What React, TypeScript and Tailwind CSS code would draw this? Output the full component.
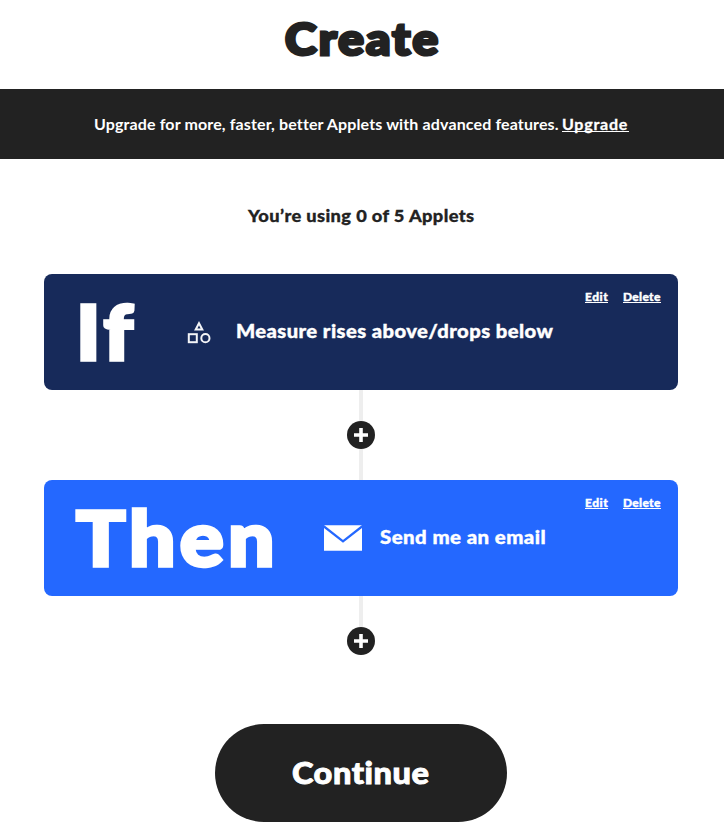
import React from "react";

function ShapesIcon() {
  return (
    <svg width="24" height="24" viewBox="0 0 24 24" fill="none" stroke="#f3f4f7" strokeWidth="2" className="block shrink-0">
      <path d="M12 3.2 15.3 9.5H8.7Z" />
      <rect x="1.8" y="14.2" width="8" height="8" />
      <circle cx="18.4" cy="18.2" r="4.1" />
    </svg>
  );
}

function MailIcon() {
  return (
    <svg width="38" height="26" viewBox="0 0 38 26" className="block shrink-0">
      <path d="M0 .3H38V25.7H0Z" fill="#fff" />
      <path d="M-1 .7 19 16.4 39 .7" fill="none" stroke="#2468ff" strokeWidth="2.3" />
    </svg>
  );
}

function Links() {
  return (
    <div className="absolute top-[15px] right-[17px] flex text-[12px] leading-4 font-black [-webkit-text-stroke:0.4px_#fff]">
      <a className="mr-[15px] h-[14px] w-[23px] border-b border-white tracking-[0.5px] whitespace-nowrap">Edit</a>
      <a className="h-[14px] w-[38px] border-b border-white tracking-[0.3px] whitespace-nowrap">Delete</a>
    </div>
  );
}

function AddStep({ last = false }: { last?: boolean }) {
  return (
    <div className="flex h-[90px] flex-col items-center">
      <div className="h-[31px] w-1 bg-[#eeeeee]" />
      <button className="flex size-7 items-center justify-center rounded-full bg-[#222222]">
        <svg width="14" height="14" viewBox="0 0 14 14">
          <path d="M7 0V14M0 7H14" stroke="#fff" strokeWidth="3.6" />
        </svg>
      </button>
      {!last && <div className="h-[31px] w-1 bg-[#eeeeee]" />}
    </div>
  );
}

export default function App() {
  return (
    <div className="h-[840px] w-[724px] overflow-hidden bg-white font-['Lato',sans-serif] text-[#222222]">
      <h1 className="h-[89px] pt-[12px] pl-[285px] text-[43px] leading-[54px] font-black tracking-[2px] [-webkit-text-stroke:3px_#222]">
        <span className="inline-block origin-left scale-x-[1.11]">Create</span>
      </h1>
      <div className="flex h-[70px] bg-[#222222] pt-[14px] pl-[94px] text-[16px] leading-[20px] font-bold whitespace-nowrap text-white">
        <p className="mt-[11px] w-[468px] tracking-[0.13px]">Upgrade for more, faster, better Applets with advanced features.</p>
        <a className="mt-[11px] h-[18px] w-[67px] border-b border-white font-bold tracking-[0.75px] [-webkit-text-stroke:0.3px_#fff]">Upgrade</a>
      </div>
      <p className="mt-[47px] h-[68px] pl-[248px] text-[17px] leading-[20px] font-black tracking-[0.35px] [-webkit-text-stroke:0.3px_#222]">
        <span className="inline-block origin-left scale-x-[1.074]">You’re using 0 of 5 Applets</span>
      </p>
      <main className="ml-[44px] w-[634px]">
        <section className="relative flex h-[116px] items-center rounded-lg bg-[#172a5a] text-white">
          <h2 className="w-[143px] pb-[4px] pl-[32px] text-[77px] leading-[112px] font-black tracking-[4px] [-webkit-text-stroke:3.5px_#fff]">
            <span className="inline-block origin-left scale-x-[1.055]">If</span>
          </h2>
          <ShapesIcon />
          <p className="ml-[25px] origin-left scale-x-[1.063] pb-[2px] text-[19px] leading-6 font-black tracking-[0.4px] whitespace-nowrap [-webkit-text-stroke:0.4px_#fff]">Measure rises above/drops below</p>
          <Links />
        </section>
        <AddStep />
        <section className="relative flex h-[116px] items-center rounded-lg bg-[#2468ff] text-white">
          <h2 className="w-[280px] pb-[4px] pl-[32px] text-[77px] leading-[112px] font-black tracking-[4px] [-webkit-text-stroke:3.5px_#fff]">
            <span className="inline-block origin-left scale-x-[1.065]">Then</span>
          </h2>
          <MailIcon />
          <p className="ml-[18px] origin-left scale-x-[1.074] pb-[2px] text-[19px] leading-6 font-black tracking-[0.4px] whitespace-nowrap [-webkit-text-stroke:0.4px_#fff]">Send me an email</p>
          <Links />
        </section>
        <AddStep last />
      </main>
      <button className="mt-[38px] ml-[215px] block h-[98px] w-[292px] rounded-full bg-[#222222] pb-[2px] pl-[77px] text-left text-[31px] leading-[40px] font-black tracking-[0.5px] text-white [-webkit-text-stroke:0.9px_#fff]">
        <span className="inline-block origin-left scale-x-[1.05]">Continue</span>
      </button>
    </div>
  );
}
